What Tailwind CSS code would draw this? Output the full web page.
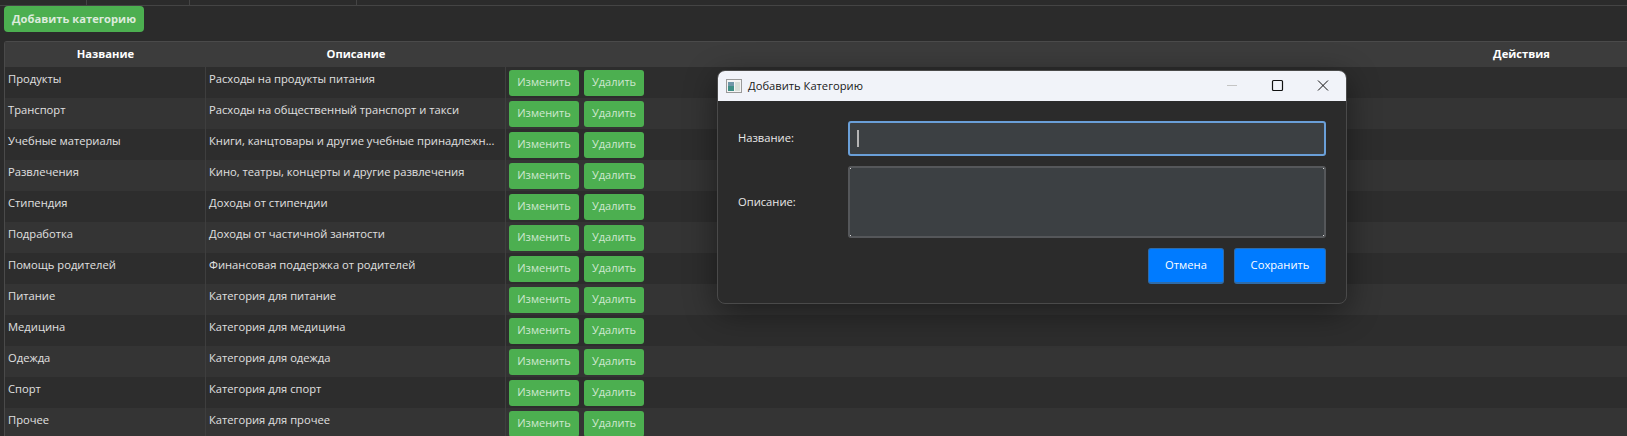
<!DOCTYPE html>
<html lang="ru">
<head>
<meta charset="utf-8">
<script src="https://cdn.jsdelivr.net/npm/@tailwindcss/browser@4"></script>
<title>Категории</title>
</head>
<body class="m-0 bg-[#2b2b2b]">
<div class="relative w-[1627px] h-[436px] overflow-hidden bg-[#2b2b2b] font-['Open_Sans','Noto_Sans',sans-serif] text-[11.2px] text-[#e0e0e0]">
  <div class="flex h-[6px] border-b border-[#444444]">
    <div class="w-[87px] border-r border-[#444444]"></div>
    <div class="w-[103px] border-r border-[#444444]"></div>
    <div class="w-[167px] border-r border-[#444444]"></div>
  </div>
  <div class="pl-1 h-[35px]">
    <button class="flex items-center justify-center w-[140px] h-[26px] rounded-[4px] bg-[#4caf50] text-[11.2px] font-bold text-[#dcebdc]">Добавить категорию</button>
  </div>
  <div class="ml-1 border-l border-t border-[#4a4a4a] rounded-tl-[3px]">
    <div class="flex h-[25px] items-center bg-[#3c3c3c] font-bold text-white">
      <div class="w-[201px] text-center">Название</div>
      <div class="w-[300px] text-center">Описание</div>
      <div class="w-[1044px] text-right">Действия</div>
    </div>
    <div class="flex h-[31px] bg-[#2d2d2d]"><div class="w-[201px] pl-[3px] pt-[4px] border-r border-[#3e3e3e]">Продукты</div><div class="w-[300px] pl-[3px] pt-[4px] border-r border-[#3e3e3e]">Расходы на продукты питания</div><div class="flex gap-[5px] pl-[3px] pt-[3px]"><button class="w-[70px] h-[26px] pb-[1px] rounded-[3px] bg-[#4caf50] text-[11px] text-[#cfe8d0]">Изменить</button><button class="w-[60px] h-[26px] pb-[1px] rounded-[3px] bg-[#4caf50] text-[11px] text-[#cfe8d0]">Удалить</button></div></div>
    <div class="flex h-[31px] bg-[#343434]"><div class="w-[201px] pl-[3px] pt-[4px] border-r border-[#3e3e3e]">Транспорт</div><div class="w-[300px] pl-[3px] pt-[4px] border-r border-[#3e3e3e]">Расходы на общественный транспорт и такси</div><div class="flex gap-[5px] pl-[3px] pt-[3px]"><button class="w-[70px] h-[26px] pb-[1px] rounded-[3px] bg-[#4caf50] text-[11px] text-[#cfe8d0]">Изменить</button><button class="w-[60px] h-[26px] pb-[1px] rounded-[3px] bg-[#4caf50] text-[11px] text-[#cfe8d0]">Удалить</button></div></div>
    <div class="flex h-[31px] bg-[#2d2d2d]"><div class="w-[201px] pl-[3px] pt-[4px] border-r border-[#3e3e3e]">Учебные материалы</div><div class="w-[300px] pl-[3px] pt-[4px] border-r border-[#3e3e3e] whitespace-nowrap">Книги, канцтовары и другие учебные принадлежн...</div><div class="flex gap-[5px] pl-[3px] pt-[3px]"><button class="w-[70px] h-[26px] pb-[1px] rounded-[3px] bg-[#4caf50] text-[11px] text-[#cfe8d0]">Изменить</button><button class="w-[60px] h-[26px] pb-[1px] rounded-[3px] bg-[#4caf50] text-[11px] text-[#cfe8d0]">Удалить</button></div></div>
    <div class="flex h-[31px] bg-[#343434]"><div class="w-[201px] pl-[3px] pt-[4px] border-r border-[#3e3e3e]">Развлечения</div><div class="w-[300px] pl-[3px] pt-[4px] border-r border-[#3e3e3e]">Кино, театры, концерты и другие развлечения</div><div class="flex gap-[5px] pl-[3px] pt-[3px]"><button class="w-[70px] h-[26px] pb-[1px] rounded-[3px] bg-[#4caf50] text-[11px] text-[#cfe8d0]">Изменить</button><button class="w-[60px] h-[26px] pb-[1px] rounded-[3px] bg-[#4caf50] text-[11px] text-[#cfe8d0]">Удалить</button></div></div>
    <div class="flex h-[31px] bg-[#2d2d2d]"><div class="w-[201px] pl-[3px] pt-[4px] border-r border-[#3e3e3e]">Стипендия</div><div class="w-[300px] pl-[3px] pt-[4px] border-r border-[#3e3e3e]">Доходы от стипендии</div><div class="flex gap-[5px] pl-[3px] pt-[3px]"><button class="w-[70px] h-[26px] pb-[1px] rounded-[3px] bg-[#4caf50] text-[11px] text-[#cfe8d0]">Изменить</button><button class="w-[60px] h-[26px] pb-[1px] rounded-[3px] bg-[#4caf50] text-[11px] text-[#cfe8d0]">Удалить</button></div></div>
    <div class="flex h-[31px] bg-[#343434]"><div class="w-[201px] pl-[3px] pt-[4px] border-r border-[#3e3e3e]">Подработка</div><div class="w-[300px] pl-[3px] pt-[4px] border-r border-[#3e3e3e]">Доходы от частичной занятости</div><div class="flex gap-[5px] pl-[3px] pt-[3px]"><button class="w-[70px] h-[26px] pb-[1px] rounded-[3px] bg-[#4caf50] text-[11px] text-[#cfe8d0]">Изменить</button><button class="w-[60px] h-[26px] pb-[1px] rounded-[3px] bg-[#4caf50] text-[11px] text-[#cfe8d0]">Удалить</button></div></div>
    <div class="flex h-[31px] bg-[#2d2d2d]"><div class="w-[201px] pl-[3px] pt-[4px] border-r border-[#3e3e3e]">Помощь родителей</div><div class="w-[300px] pl-[3px] pt-[4px] border-r border-[#3e3e3e]">Финансовая поддержка от родителей</div><div class="flex gap-[5px] pl-[3px] pt-[3px]"><button class="w-[70px] h-[26px] pb-[1px] rounded-[3px] bg-[#4caf50] text-[11px] text-[#cfe8d0]">Изменить</button><button class="w-[60px] h-[26px] pb-[1px] rounded-[3px] bg-[#4caf50] text-[11px] text-[#cfe8d0]">Удалить</button></div></div>
    <div class="flex h-[31px] bg-[#343434]"><div class="w-[201px] pl-[3px] pt-[4px] border-r border-[#3e3e3e]">Питание</div><div class="w-[300px] pl-[3px] pt-[4px] border-r border-[#3e3e3e]">Категория для питание</div><div class="flex gap-[5px] pl-[3px] pt-[3px]"><button class="w-[70px] h-[26px] pb-[1px] rounded-[3px] bg-[#4caf50] text-[11px] text-[#cfe8d0]">Изменить</button><button class="w-[60px] h-[26px] pb-[1px] rounded-[3px] bg-[#4caf50] text-[11px] text-[#cfe8d0]">Удалить</button></div></div>
    <div class="flex h-[31px] bg-[#2d2d2d]"><div class="w-[201px] pl-[3px] pt-[4px] border-r border-[#3e3e3e]">Медицина</div><div class="w-[300px] pl-[3px] pt-[4px] border-r border-[#3e3e3e]">Категория для медицина</div><div class="flex gap-[5px] pl-[3px] pt-[3px]"><button class="w-[70px] h-[26px] pb-[1px] rounded-[3px] bg-[#4caf50] text-[11px] text-[#cfe8d0]">Изменить</button><button class="w-[60px] h-[26px] pb-[1px] rounded-[3px] bg-[#4caf50] text-[11px] text-[#cfe8d0]">Удалить</button></div></div>
    <div class="flex h-[31px] bg-[#343434]"><div class="w-[201px] pl-[3px] pt-[4px] border-r border-[#3e3e3e]">Одежда</div><div class="w-[300px] pl-[3px] pt-[4px] border-r border-[#3e3e3e]">Категория для одежда</div><div class="flex gap-[5px] pl-[3px] pt-[3px]"><button class="w-[70px] h-[26px] pb-[1px] rounded-[3px] bg-[#4caf50] text-[11px] text-[#cfe8d0]">Изменить</button><button class="w-[60px] h-[26px] pb-[1px] rounded-[3px] bg-[#4caf50] text-[11px] text-[#cfe8d0]">Удалить</button></div></div>
    <div class="flex h-[31px] bg-[#2d2d2d]"><div class="w-[201px] pl-[3px] pt-[4px] border-r border-[#3e3e3e]">Спорт</div><div class="w-[300px] pl-[3px] pt-[4px] border-r border-[#3e3e3e]">Категория для спорт</div><div class="flex gap-[5px] pl-[3px] pt-[3px]"><button class="w-[70px] h-[26px] pb-[1px] rounded-[3px] bg-[#4caf50] text-[11px] text-[#cfe8d0]">Изменить</button><button class="w-[60px] h-[26px] pb-[1px] rounded-[3px] bg-[#4caf50] text-[11px] text-[#cfe8d0]">Удалить</button></div></div>
    <div class="flex h-[31px] bg-[#343434]"><div class="w-[201px] pl-[3px] pt-[4px] border-r border-[#3e3e3e]">Прочее</div><div class="w-[300px] pl-[3px] pt-[4px] border-r border-[#3e3e3e]">Категория для прочее</div><div class="flex gap-[5px] pl-[3px] pt-[3px]"><button class="w-[70px] h-[26px] pb-[1px] rounded-[3px] bg-[#4caf50] text-[11px] text-[#cfe8d0]">Изменить</button><button class="w-[60px] h-[26px] pb-[1px] rounded-[3px] bg-[#4caf50] text-[11px] text-[#cfe8d0]">Удалить</button></div></div>
  </div>

  <div class="absolute left-[717px] top-[70px] w-[630px] h-[234px] rounded-[8px] border border-[#4a4a4a] bg-[#2b2b2b] overflow-hidden shadow-[0_8px_32px_rgba(0,0,0,0.45)] flex flex-col">
    <div class="flex items-center h-[30px] bg-[#f1f3f9] text-[#1a1a1a] shrink-0">
      <svg class="ml-[8px]" width="16" height="14" viewBox="0 0 16 14"><rect x="0.5" y="0.5" width="15" height="13" fill="#f4f4f4" stroke="#9a9a9a"/><rect x="2" y="3" width="6" height="9" fill="#3f8f86"/><rect x="2" y="3" width="6" height="4" fill="#6f97a8"/><rect x="9" y="3" width="5" height="9" fill="#d7dfd8"/></svg>
      <span class="ml-[6px]">Добавить Категорию</span>
      <svg class="ml-auto" width="140" height="30" viewBox="0 0 140 30" fill="none"><path d="M21 14.5H31" stroke="#c4c4c4"/><rect x="66.5" y="9.5" width="10" height="10" rx="1" stroke="#111" stroke-width="1.2"/><path d="M112 9.5L122 19.5M122 9.5L112 19.5" stroke="#111" stroke-width="1"/></svg>
    </div>
    <div class="flex flex-col px-[20px] pt-[20px]">
      <div class="flex items-center">
        <label class="w-[110px] text-[#e8e8e8]">Название:</label>
        <div class="w-[478px] h-[35px] rounded-[3px] border-2 border-[#6a9fd8] bg-[#3c4043] flex items-center pl-[7px]"><div class="w-[2px] h-[17px] bg-[#b5b5b5]"></div></div>
      </div>
      <div class="flex items-center mt-[10px]">
        <label class="w-[110px] text-[#e8e8e8]">Описание:</label>
        <div class="relative w-[478px] h-[72px] rounded-[3px] border-2 border-[#55575a] bg-[#3c4043]">
          <span class="absolute left-0 top-0 w-[1px] h-[1px] bg-[#d8d8d8]"></span>
          <span class="absolute right-0 top-0 w-[1px] h-[1px] bg-[#d8d8d8]"></span>
          <span class="absolute left-0 bottom-0 w-[1px] h-[1px] bg-[#d8d8d8]"></span>
          <span class="absolute right-0 bottom-0 w-[1px] h-[1px] bg-[#d8d8d8]"></span>
        </div>
      </div>
      <div class="flex justify-end gap-[10px] mt-[10px]">
        <button class="w-[76px] h-[36px] rounded-[3px] border border-b-2 border-[#2f6ba8] bg-[#007bff] text-[11.2px] text-white">Отмена</button>
        <button class="w-[92px] h-[36px] rounded-[3px] border border-b-2 border-[#2f6ba8] bg-[#007bff] text-[11.2px] text-white">Сохранить</button>
      </div>
    </div>
  </div>
</div>
</body>
</html>
